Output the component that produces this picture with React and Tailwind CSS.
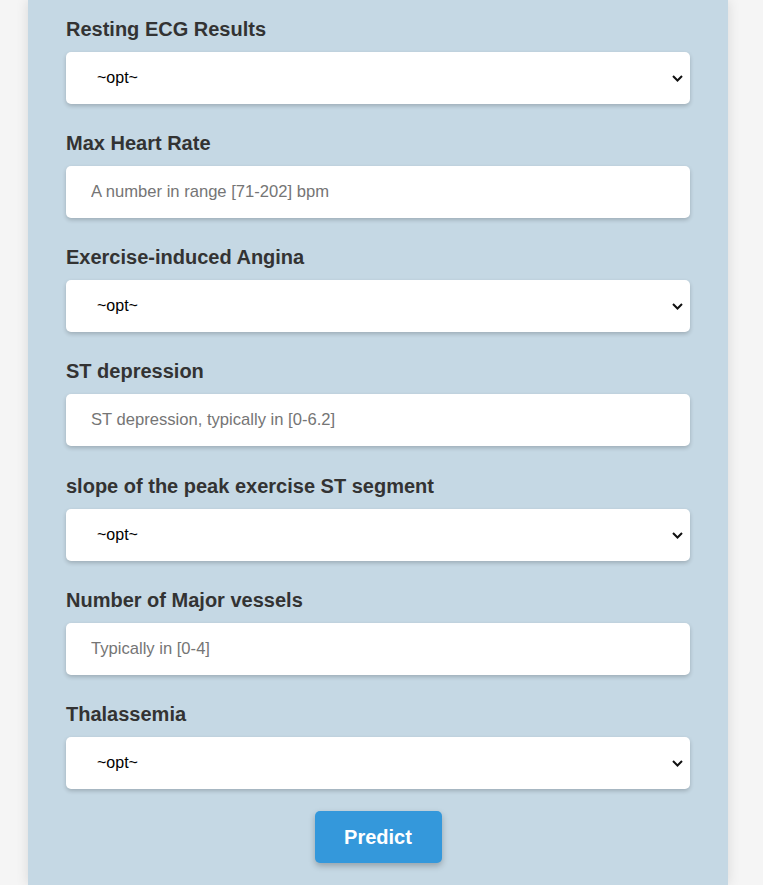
import React from "react";

const fields = [
  { label: "Resting ECG Results", type: "select" },
  { label: "Max Heart Rate", type: "input", placeholder: "A number in range [71-202] bpm" },
  { label: "Exercise-induced Angina", type: "select" },
  { label: "ST depression", type: "input", placeholder: "ST depression, typically in [0-6.2]" },
  { label: "slope of the peak exercise ST segment", type: "select" },
  { label: "Number of Major vessels", type: "input", placeholder: "Typically in [0-4]" },
  { label: "Thalassemia", type: "select" },
];

function Field({ field }) {
  return (
    <div className="flex flex-col">
      <label className="block text-[20px] leading-[23px] font-bold text-[#333] mb-[11px]">
        {field.label}
      </label>
      {field.type === "select" ? (
        <div className="relative">
          <select
            defaultValue=""
            className="appearance-none h-[52px] w-full bg-white rounded-[5px] pl-[31px] pr-[24px] text-[16px] text-black shadow-[0_2px_4px_rgba(0,0,0,0.2)] outline-none"
          >
            <option value="">~opt~</option>
            <option value="0">0</option>
            <option value="1">1</option>
            <option value="2">2</option>
          </select>
          {/* chevron */}
          <svg
            className="pointer-events-none absolute right-[7px] top-[23px]"
            width="11"
            height="7"
            viewBox="0 0 11 7"
          >
            <path d="M1 1l4.5 4.5L10 1" fill="none" stroke="#111" strokeWidth="2" />
          </svg>
        </div>
      ) : (
        <input
          type="text"
          placeholder={field.placeholder}
          className="h-[52px] w-full bg-white rounded-[5px] px-[25px] text-[16.6px] text-black placeholder:text-[#757575] shadow-[0_2px_4px_rgba(0,0,0,0.2)] outline-none"
        />
      )}
    </div>
  );
}

export default function App() {
  return (
    <div className="min-h-[885px] bg-[#f5f5f5] font-['Liberation_Sans',Arial,sans-serif]">
      <div className="ml-[28px] w-[700px] min-h-[885px] bg-[#c5d8e4] shadow-[0_0_12px_rgba(0,0,0,0.12)] pt-[17.5px] px-[38px] pb-[22px]">
        <div className="flex flex-col gap-[28.3px]">
          {fields.map((f) => (
            <Field key={f.label} field={f} />
          ))}
        </div>
        <div className="flex justify-center mt-[22px]">
          <button className="h-[52px] w-[127px] bg-[#3498db] text-white text-[20px] font-bold rounded-[5px] shadow-[0_3px_6px_rgba(0,0,0,0.25)]">
            Predict
          </button>
        </div>
      </div>
    </div>
  );
}
